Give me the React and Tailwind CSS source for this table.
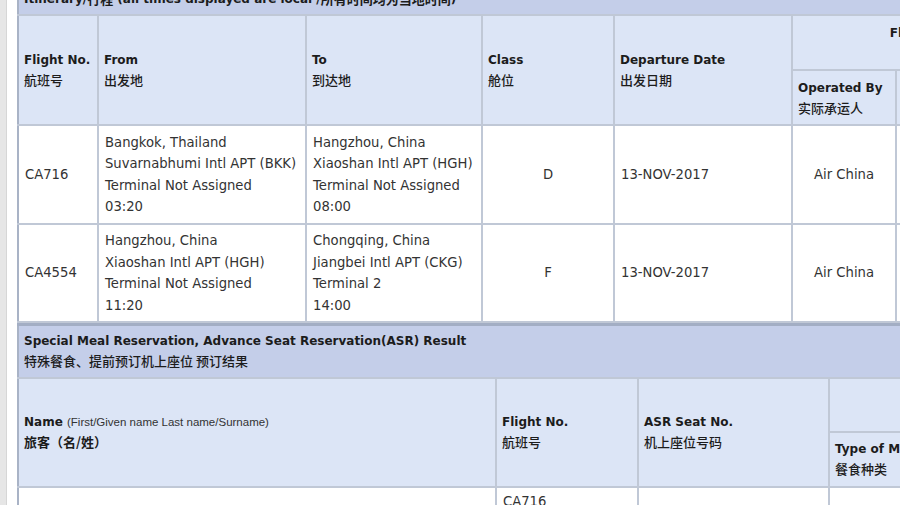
import React from "react";

const FONT = { fontFamily: '"DejaVu Sans", "Noto Sans CJK SC", sans-serif' };
const ZHF = { fontFamily: '"Noto Sans CJK SC", "DejaVu Sans", sans-serif' };

function ZhLine({ children, bold, className = "" }) {
  return (
    <div
      className={`text-[13px] h-[19px] leading-[19px] ${bold ? "font-bold" : "font-medium"} ${className}`}
      style={ZHF}
    >
      {children}
    </div>
  );
}

const B = "border-2 border-[#c0c8d6]";
const BL = "border-l-[#a9b3c6]";
const TH = `${B} bg-[#dce5f6] text-left align-middle px-[5px] font-bold text-[#1c1c1c] leading-[19px]`;
const TD = `${B} bg-white align-middle px-[6px] text-[#333] text-[13.2px] leading-[21.5px]`;

function HeadCell({ en, zh, rowSpan, colSpan, className = "" }) {
  return (
    <th rowSpan={rowSpan} colSpan={colSpan} className={`${TH} ${className}`}>
      <div className="h-[19px]">{en}</div>
      <ZhLine>{zh}</ZhLine>
    </th>
  );
}

const flights = [
  {
    no: "CA716",
    from: ["Bangkok, Thailand", "Suvarnabhumi Intl APT (BKK)", "Terminal Not Assigned", "03:20"],
    to: ["Hangzhou, China", "Xiaoshan Intl APT (HGH)", "Terminal Not Assigned", "08:00"],
    cls: "D",
    date: "13-NOV-2017",
    op: "Air China",
    h: "h-[99px]",
  },
  {
    no: "CA4554",
    from: ["Hangzhou, China", "Xiaoshan Intl APT (HGH)", "Terminal Not Assigned", "11:20"],
    to: ["Chongqing, China", "Jiangbei Intl APT (CKG)", "Terminal 2", "14:00"],
    cls: "F",
    date: "13-NOV-2017",
    op: "Air China",
    h: "h-[98px]",
  },
];

export default function App() {
  return (
    <div className="w-[900px] h-[505px] overflow-hidden bg-white flex text-[12px]" style={FONT}>
      <div className="w-[7px] shrink-0 bg-[#e6e6e6] border-r border-[#d6d6d6]" />
      <div className="w-[10px] shrink-0 bg-white" />
      <div className="flex-1 min-w-0 overflow-hidden">
        <div className="-mt-[20px] w-[1100px]">
          <table className="table-fixed border-collapse w-[1057px]">
            <colgroup>
              <col className="w-[80px]" />
              <col className="w-[208px]" />
              <col className="w-[176px]" />
              <col className="w-[132px]" />
              <col className="w-[178px]" />
              <col className="w-[104px]" />
              <col className="w-[179px]" />
            </colgroup>
            <tbody>
              <tr className="h-[34px]">
                <td
                  colSpan={7}
                  className={`${B} ${BL} bg-[#c4cee9] font-bold text-[#1c1c1c] px-[5px] pt-[7px] pb-[5px] align-top`}
                >
                  <div className="h-[20px] leading-[20px] whitespace-nowrap overflow-hidden flex items-center">
                    <span>Itinerary/</span>
                    <span className="text-[13px]" style={ZHF}>行程</span>
                    <span>&nbsp;(all times displayed are local / </span>
                    <span className="text-[13px]" style={ZHF}>所有时间均为当地时间</span>
                    <span>)</span>
                  </div>
                </td>
              </tr>
              <tr className="h-[55px]">
                <HeadCell en="Flight No." zh="航班号" rowSpan={2} className={BL} />
                <HeadCell en="From" zh="出发地" rowSpan={2} />
                <HeadCell en="To" zh="到达地" rowSpan={2} />
                <HeadCell en="Class" zh="舱位" rowSpan={2} />
                <HeadCell en="Departure Date" zh="出发日期" rowSpan={2} />
                <HeadCell en="Flight Status" zh="航班状态" colSpan={2} className="!text-center" />
              </tr>
              <tr className="h-[55px]">
                <HeadCell en="Operated By" zh="实际承运人" />
                <HeadCell en="Status" zh="状态" />
              </tr>
              {flights.map((f) => (
                <tr key={f.no} className={f.h}>
                  <td className={`${TD} ${BL}`}>{f.no}</td>
                  <td className={TD}>
                    {f.from.map((l) => (
                      <div key={l} className="whitespace-nowrap">{l}</div>
                    ))}
                  </td>
                  <td className={TD}>
                    {f.to.map((l) => (
                      <div key={l} className="whitespace-nowrap">{l}</div>
                    ))}
                  </td>
                  <td className={`${TD} text-center`}>{f.cls}</td>
                  <td className={TD}>{f.date}</td>
                  <td className={`${TD} text-center`}>{f.op}</td>
                  <td className={`${TD} text-center`}>Confirmed</td>
                </tr>
              ))}
            </tbody>
          </table>

          <table className="table-fixed border-collapse w-[1057px]">
            <colgroup>
              <col className="w-[478px]" />
              <col className="w-[142px]" />
              <col className="w-[191px]" />
              <col className="w-[246px]" />
            </colgroup>
            <tbody>
              <tr className="h-[53px]">
                <td
                  colSpan={4}
                  className={`${B} ${BL} border-t-[3px] border-t-[#a3aec4] bg-[#c4cee9] font-bold text-[#1c1c1c] px-[5px] pt-[5px] pb-[4px] align-top`}
                >
                  <div className="h-[20px] leading-[20px] whitespace-nowrap">
                    Special Meal Reservation, Advance Seat Reservation(ASR) Result
                  </div>
                  <ZhLine className="!h-[20px] !leading-[20px]">特殊餐食、提前预订机上座位 预订结果</ZhLine>
                </td>
              </tr>
              <tr className="h-[54px]">
                <th rowSpan={2} className={`${TH} ${BL}`}>
                  <div className="h-[19px] whitespace-nowrap">
                    Name{" "}
                    <span
                      className="font-normal text-[11.5px] text-[#333]"
                      style={{ fontFamily: '"Liberation Sans", Arial, sans-serif' }}
                    >
                      (First/Given name Last name/Surname)
                    </span>
                  </div>
                  <ZhLine bold>旅客（名/姓）</ZhLine>
                </th>
                <HeadCell en="Flight No." zh="航班号" rowSpan={2} />
                <HeadCell en="ASR Seat No." zh="机上座位号码" rowSpan={2} />
                <th className={`${TH} text-right`}>
                  <div className="h-[19px] pr-[20px]">Special Meal</div>
                  <ZhLine className="pr-[20px]">特殊餐食</ZhLine>
                </th>
              </tr>
              <tr className="h-[55px]">
                <HeadCell en="Type of Meal" zh="餐食种类" />
              </tr>
              <tr className="h-[60px]">
                <td className={`${TD} ${BL}`}></td>
                <td className={`${TD} align-top pt-[3px]`}>CA716</td>
                <td className={TD}></td>
                <td className={TD}></td>
              </tr>
            </tbody>
          </table>
        </div>
      </div>
    </div>
  );
}
